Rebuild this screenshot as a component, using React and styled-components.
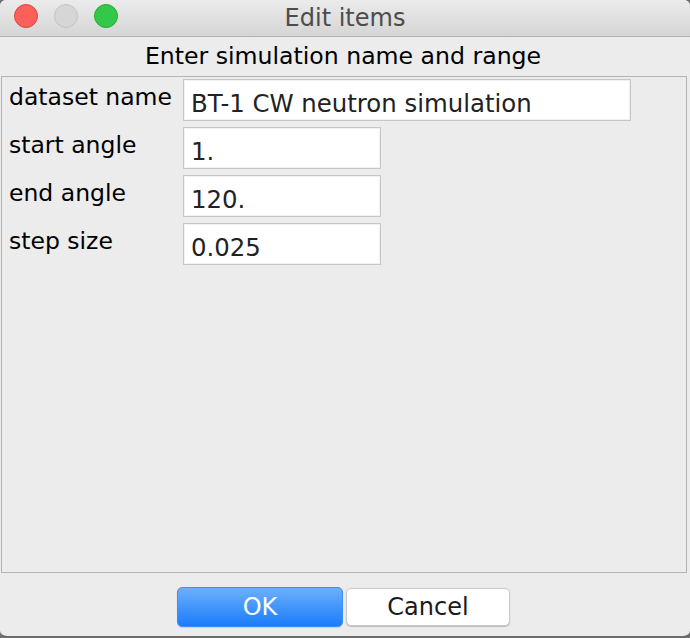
import React from "react";
import styled, { createGlobalStyle } from "styled-components";

const GlobalStyle = createGlobalStyle`
  html, body {
    margin: 0;
    padding: 0;
    background: #6f6f6f;
  }
  * {
    box-sizing: border-box;
  }
`;

const Window = styled.div`
  width: 690px;
  height: 638px;
  display: flex;
  flex-direction: column;
  background: #ececec;
  border-bottom: 2px solid #6b6b6b;
  border-radius: 6px 6px 7px 7px;
  overflow: hidden;
  font-family: "DejaVu Sans", "Open Sans", sans-serif;
`;

const TitleBar = styled.div`
  height: 37px;
  flex: none;
  position: relative;
  display: flex;
  align-items: center;
  justify-content: center;
  background: linear-gradient(#ebebeb, #d5d5d5);
  border-bottom: 1px solid #b1b1b1;
`;

const Lights = styled.div`
  position: absolute;
  left: 14px;
  top: 4px;
  display: flex;
  gap: 16px;
`;

const Light = styled.span`
  width: 24px;
  height: 24px;
  border-radius: 50%;
  background: ${(p) => p.$fill};
  border: 1px solid ${(p) => p.$edge};
`;

const Title = styled.div`
  font-size: 24px;
  line-height: 36px;
  color: #4c4c4c;
`;

const Heading = styled.div`
  height: 39px;
  flex: none;
  text-align: center;
  font-size: 23.6px;
  line-height: 39px;
  color: #000;
  padding-right: 4px;
`;

const Panel = styled.div`
  flex: 1;
  margin: 0 3px 0 1px;
  border: 1px solid #b3b3b3;
  padding: 2px 0 0 7px;
  display: grid;
  grid-template-columns: 174px auto;
  grid-auto-rows: 42px;
  row-gap: 6px;
  align-content: start;
  justify-content: start;
`;

const Label = styled.div`
  font-size: 23.5px;
  line-height: 28px;
  padding-top: 4px;
  color: #000;
  white-space: nowrap;
`;

const Field = styled.input`
  width: ${(p) => p.$width}px;
  height: 42px;
  margin: 0;
  padding: 6px 7px 0;
  border: 1px solid #c6c6c6;
  box-shadow: inset 0 0 0 1px #f2f2f2;
  background: #fff;
  font-family: "DejaVu Sans", "Open Sans", sans-serif;
  font-size: 24.4px;
  color: #222;
  outline: none;
`;

const Footer = styled.div`
  height: 63px;
  flex: none;
  display: flex;
  justify-content: center;
  align-items: flex-start;
  gap: 3px;
  padding: 14px 3px 0 0;
`;

const Button = styled.button`
  width: ${(p) => (p.$primary ? 166 : 164)}px;
  height: ${(p) => (p.$primary ? 40 : 38)}px;
  margin-top: ${(p) => (p.$primary ? 0 : 1)}px;
  border-radius: 5px;
  font-family: "DejaVu Sans", "Open Sans", sans-serif;
  font-size: 24px;
  padding: 0;
  color: ${(p) => (p.$primary ? "#fff" : "#1a1a1a")};
  background: ${(p) =>
    p.$primary ? "linear-gradient(#6db0fb, #1a7cfb)" : "#fff"};
  border: 1px solid ${(p) => (p.$primary ? "#3b8ef5" : "#c8c8c8")};
  box-shadow: ${(p) =>
    p.$primary ? "0 1px 1px rgba(0,0,0,0.12)" : "0 1px 1px rgba(0,0,0,0.2)"};
`;

const rows = [
  { label: "dataset name", value: "BT-1 CW neutron simulation", width: 448 },
  { label: "start angle", value: "1.", width: 198 },
  { label: "end angle", value: "120.", width: 198 },
  { label: "step size", value: "0.025", width: 198 },
];

export default function App() {
  return (
    <>
      <GlobalStyle />
      <Window>
        <TitleBar>
          <Lights>
            <Light $fill="#fc605b" $edge="#e0443e" />
            <Light $fill="#d6d6d6" $edge="#c2c2c2" />
            <Light $fill="#34c84a" $edge="#27aa35" />
          </Lights>
          <Title>Edit items</Title>
        </TitleBar>
        <Heading>Enter simulation name and range</Heading>
        <Panel>
          {rows.map((r) => (
            <React.Fragment key={r.label}>
              <Label>{r.label}</Label>
              <Field readOnly value={r.value} $width={r.width} />
            </React.Fragment>
          ))}
        </Panel>
        <Footer>
          <Button $primary>OK</Button>
          <Button>Cancel</Button>
        </Footer>
      </Window>
    </>
  );
}
